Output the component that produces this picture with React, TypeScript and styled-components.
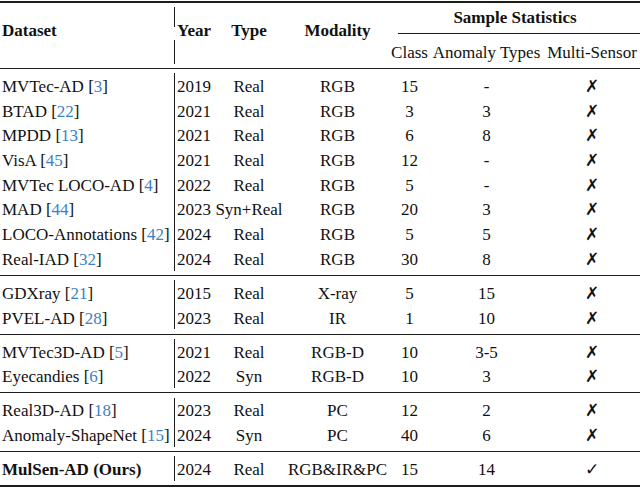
import React from 'react';
import styled, { createGlobalStyle } from 'styled-components';

const GlobalStyle = createGlobalStyle`
  html, body {
    margin: 0;
    padding: 0;
    background: #fff;
  }
  body {
    font-family: 'Liberation Serif', 'Times New Roman', serif;
    color: #111;
  }
`;

const COLS = '174px 1px 38px 72px 105px 39px 115px 96px';

const Table = styled.div`
  width: 640px;
  padding-top: 1px;
  font-size: 17px;
  line-height: 1;
`;

const HRule = styled.div<{ $thick?: boolean }>`
  height: ${(p) => (p.$thick ? 2 : 1)}px;
  background: #1c1c1c;
`;

const Header = styled.div`
  display: grid;
  grid-template-columns: ${COLS};
  grid-template-rows: 20px 13px 24px;
  padding: 4px 0;
`;

const HeadCell = styled.div<{ $col: string; $row: string; $center?: boolean; $bold?: boolean; $lift?: number }>`
  grid-column: ${(p) => p.$col};
  grid-row: ${(p) => p.$row};
  display: flex;
  align-items: center;
  justify-content: ${(p) => (p.$center ? 'center' : 'flex-start')};
  padding-left: ${(p) => (p.$center ? 0 : 2)}px;
  padding-bottom: ${(p) => p.$lift || 0}px;
  font-weight: ${(p) => (p.$bold ? 700 : 400)};
  white-space: nowrap;
`;

const HeadLine = styled.div<{ $row: string }>`
  grid-column: 2;
  grid-row: ${(p) => p.$row};
  background: #1c1c1c;
`;

const CMidRule = styled.div`
  grid-column: 6 / 9;
  grid-row: 2;
  align-self: center;
  height: 1px;
  margin-left: 8px;
  background: #1c1c1c;
`;

const Group = styled.div`
  padding: 4.2px 0;
`;

const Row = styled.div`
  display: grid;
  grid-template-columns: ${COLS};
  height: 24.7px;
  align-items: center;
`;

const Cell = styled.div<{ $center?: boolean; $bold?: boolean }>`
  text-align: ${(p) => (p.$center ? 'center' : 'left')};
  padding-left: ${(p) => (p.$center ? 0 : 2)}px;
  padding-top: 2px;
  font-weight: ${(p) => (p.$bold ? 700 : 400)};
  white-space: nowrap;
`;

const VLine = styled.div`
  align-self: stretch;
  background: #1c1c1c;
`;

const Cite = styled.span`
  color: #3c7fc6;
`;

const Mark = styled.span`
  font-family: 'DejaVu Sans', sans-serif;
  font-size: 17px;
  font-weight: 700;
`;

type Entry = {
  name: string;
  cite?: string;
  year: string;
  type: string;
  modality: string;
  classes: string;
  anomalies: string;
  multi: boolean;
  ours?: boolean;
};

const e = (
  name: string,
  cite: string,
  year: string,
  type: string,
  modality: string,
  classes: string,
  anomalies: string
): Entry => ({ name, cite, year, type, modality, classes, anomalies, multi: false });

const groups: Entry[][] = [
  [
    e('MVTec-AD', '3', '2019', 'Real', 'RGB', '15', '-'),
    e('BTAD', '22', '2021', 'Real', 'RGB', '3', '3'),
    e('MPDD', '13', '2021', 'Real', 'RGB', '6', '8'),
    e('VisA', '45', '2021', 'Real', 'RGB', '12', '-'),
    e('MVTec LOCO-AD', '4', '2022', 'Real', 'RGB', '5', '-'),
    e('MAD', '44', '2023', 'Syn+Real', 'RGB', '20', '3'),
    e('LOCO-Annotations', '42', '2024', 'Real', 'RGB', '5', '5'),
    e('Real-IAD', '32', '2024', 'Real', 'RGB', '30', '8'),
  ],
  [
    e('GDXray', '21', '2015', 'Real', 'X-ray', '5', '15'),
    e('PVEL-AD', '28', '2023', 'Real', 'IR', '1', '10'),
  ],
  [
    e('MVTec3D-AD', '5', '2021', 'Real', 'RGB-D', '10', '3-5'),
    e('Eyecandies', '6', '2022', 'Syn', 'RGB-D', '10', '3'),
  ],
  [
    e('Real3D-AD', '18', '2023', 'Real', 'PC', '12', '2'),
    e('Anomaly-ShapeNet', '15', '2024', 'Syn', 'PC', '40', '6'),
  ],
  [
    {
      name: 'MulSen-AD (Ours)',
      year: '2024',
      type: 'Real',
      modality: 'RGB&IR&PC',
      classes: '15',
      anomalies: '14',
      multi: true,
      ours: true,
    },
  ],
];

const App = () => (
  <>
    <GlobalStyle />
    <Table>
      <HRule $thick />
      <Header>
        <HeadCell $col="1" $row="1 / 4" $bold $lift={11}>Dataset</HeadCell>
        <HeadLine $row="1" />
        <HeadLine $row="3" />
        <HeadCell $col="3" $row="1 / 4" $bold $lift={11}>Year</HeadCell>
        <HeadCell $col="4" $row="1 / 4" $bold $center $lift={11}>Type</HeadCell>
        <HeadCell $col="5" $row="1 / 4" $bold $center $lift={11}>Modality</HeadCell>
        <HeadCell $col="6 / 9" $row="1" $bold $center>Sample Statistics</HeadCell>
        <CMidRule />
        <HeadCell $col="6" $row="3" $center>Class</HeadCell>
        <HeadCell $col="7" $row="3" $center>Anomaly Types</HeadCell>
        <HeadCell $col="8" $row="3" $center>Multi-Sensor</HeadCell>
      </Header>
      {groups.map((rows, gi) => (
        <React.Fragment key={gi}>
          <HRule />
          <Group>
            {rows.map((r) => (
              <Row key={r.name}>
                <Cell $bold={r.ours}>
                  {r.name}
                  {r.cite && (
                    <>
                      {' ['}
                      <Cite>{r.cite}</Cite>]
                    </>
                  )}
                </Cell>
                <VLine />
                <Cell>{r.year}</Cell>
                <Cell $center>{r.type}</Cell>
                <Cell $center>{r.modality}</Cell>
                <Cell $center>{r.classes}</Cell>
                <Cell $center>{r.anomalies}</Cell>
                <Cell $center>
                  <Mark>{r.multi ? '\u2713' : '\u2717'}</Mark>
                </Cell>
              </Row>
            ))}
          </Group>
        </React.Fragment>
      ))}
      <HRule $thick />
    </Table>
  </>
);

export default App;
